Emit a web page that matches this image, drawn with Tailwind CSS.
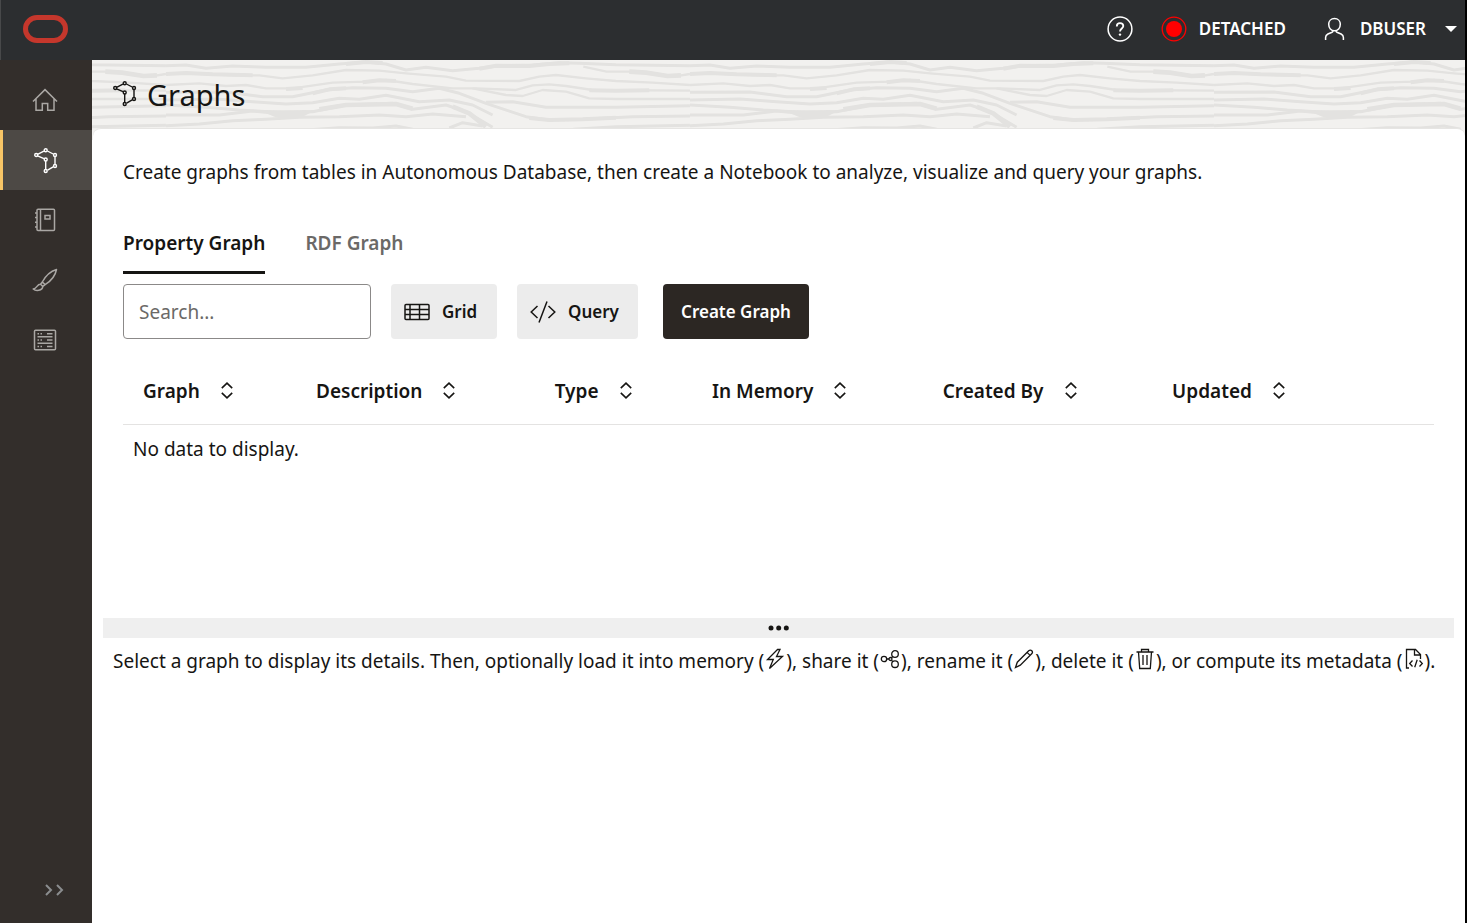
<!DOCTYPE html>
<html lang="en">
<head>
<meta charset="utf-8">
<meta name="viewport" content="width=device-width, initial-scale=1">
<title>Graphs</title>
<script src="https://cdn.jsdelivr.net/npm/@tailwindcss/browser@4"></script>
</head>
<body class="flex min-h-screen flex-col border-r-2 border-black bg-white font-['Noto_Sans','Open_Sans',sans-serif] text-[19px] leading-6 text-[#161513]">

<svg class="hidden" aria-hidden="true">
  <symbol id="graph" viewBox="0 0 24 26">
    <g fill="none" stroke="currentColor" stroke-width="1.4">
      <path d="M3.6 6.3 9.9 3.2M13.4 3 19.2 6M21 8.6v7.8M19.2 18.8l-5.6 3.4M11.7 21.4v-8.5M10 10.6 3.6 7.8"/>
      <circle cx="2.2" cy="7" r="1.5"/><circle cx="11.7" cy="2.3" r="1.5"/><circle cx="21" cy="7" r="1.5"/>
      <circle cx="11.7" cy="11.5" r="1.5"/><circle cx="21" cy="18" r="1.5"/><circle cx="11.7" cy="23" r="1.5"/>
    </g>
  </symbol>
  <symbol id="sort" viewBox="0 0 12 17">
    <path d="m.8 6.200 5.200-5 5.200 5M.8 10.800l5.200 5 5.200-5" fill="none" stroke="currentColor" stroke-width="1.600"/>
  </symbol>
</svg>

<header class="flex h-[60px] items-center justify-between border-l border-[#48494a] bg-[#2c2e30] pr-2 pb-0.5 pl-[22px] font-semibold text-white">
  <a href="#" aria-label="Oracle home">
    <svg width="45" height="28" viewBox="0 0 45 28"><rect x="2.5" y="2.5" width="40" height="23" rx="11.5" fill="none" stroke="#c5372c" stroke-width="5"/></svg>
  </a>
  <div class="flex items-center">
    <button type="button" aria-label="Help">
      <svg width="26" height="26" viewBox="0 0 26 26" fill="none" stroke="#fff" stroke-width="1.5"><circle cx="13" cy="13" r="11.9"/><path d="M9.800 10.400c0-2 1.400-3.200 3.200-3.200s3.300 1.100 3.300 2.900c0 2.300-3.300 2.600-3.300 5.500" stroke-width="1.800"/><circle cx="13" cy="18.600" r="1.200" fill="#fff" stroke="none"/></svg>
    </button>
    <button type="button" class="ml-7 flex items-center gap-3 text-[17px]">
      <svg width="26" height="26" viewBox="0 0 26 26"><circle cx="13" cy="13" r="11.800" fill="none" stroke="#f00" stroke-width="1.300"/><circle cx="13" cy="13" r="8" fill="#f00"/></svg>
      DETACHED
    </button>
    <button type="button" class="ml-[38px] flex items-center text-[17px]">
      <svg class="mr-[14px]" width="22" height="24" viewBox="0 0 22 24" fill="none" stroke="#fff" stroke-width="1.500"><path d="M10.500 1.500c3.400 0 5.800 2.500 5.800 5.800 0 3.600-2.400 6.500-5.800 6.500s-5.800-2.900-5.800-6.500c0-3.300 2.400-5.800 5.800-5.800Z"/><path d="M1.600 23v-2.500c0-1.800.7-2.700 2.300-3.500l4.200-1.800c.9-.4 1-.8 1-1.500M19.400 23v-2.500c0-1.800-.7-2.700-2.300-3.500l-4.200-1.800c-.9-.4-1-.8-1-1.500"/></svg>
      DBUSER
      <svg class="ml-[19px]" width="12" height="6" viewBox="0 0 12 6"><path d="M0 0h12L6 6Z" fill="#fff"/></svg>
    </button>
  </div>
</header>

<div class="flex flex-1">
  <nav class="flex w-[92px] shrink-0 flex-col bg-[#332e2b] pt-[10px] text-[#aaa7a4]" aria-label="Main">
    <a href="#" aria-label="Home" class="flex h-[60px] items-center justify-center pr-0.5">
      <svg width="26" height="24" viewBox="0 0 26 24" fill="none" stroke="currentColor" stroke-width="1.500"><path d="M1 13.500 13 1.600l12 11.900M4 11v11.200h6.300v-6.800h5.400v6.800H22V11"/></svg>
    </a>
    <a href="#" aria-label="Graphs" aria-current="page" class="flex h-[60px] items-center justify-center border-l-3 border-[#f7c566] bg-[#4d4945] pt-0.5 pr-1 text-white">
      <svg class="h-[26px] w-6"><use href="#graph"/></svg>
    </a>
    <a href="#" aria-label="Notebooks" class="flex h-[60px] items-center justify-center pr-0.5">
      <svg width="22" height="24" viewBox="0 0 22 24" fill="none" stroke="currentColor" stroke-width="1.500"><rect x="3" y="1.300" width="17.500" height="21.200" rx="1"/><path d="M6.500 1.300v21.200M1 5h2M1 9.500h2M1 14.200h2M1 19h2"/><rect x="11" y="7.500" width="5" height="3.500"/></svg>
    </a>
    <a href="#" aria-label="Templates" class="flex h-[60px] items-center justify-center pr-0.5">
      <svg width="26" height="24" viewBox="0 0 26 24" fill="none" stroke="currentColor" stroke-width="1.500" stroke-linejoin="round"><path d="M24.500 1.500C19.500 3 13.500 8 10.300 14l2.800 2.600C19 13 23.500 7 24.500 1.500ZM10.300 14l-1.800 2.300 2.300 2.100 2.300-1.800M8.500 16.300c-3.300-.5-3.500 4.500-7.300 4.700 2.500 2.200 9.300 2 9.600-2.600"/></svg>
    </a>
    <a href="#" aria-label="Jobs" class="flex h-[60px] items-center justify-center pr-0.5">
      <svg width="24" height="22" viewBox="0 0 24 22" fill="none" stroke="currentColor" stroke-width="1.500"><rect x="1.500" y="1.300" width="21" height="19.500" rx="1"/><path d="M4.500 7.800h15M4.500 14.200h15M14 4.700h5.500M14 11h5.500M14 17.400h5.500M4.500 4.700H6m1.500 0H9M4.500 11H6m1.500 0H9m-4.500 6.400H6m1.500 0H9"/></svg>
    </a>
    <button type="button" aria-label="Expand navigation" class="mt-auto mb-[26px] ml-11 w-5 text-[#8b8d8f]">
      <svg width="20" height="14" viewBox="0 0 20 14" fill="none" stroke="currentColor" stroke-width="2"><path d="m2 2 5 5-5 5M13 2l5 5-5 5"/></svg>
    </button>
  </nav>

  <main class="relative isolate flex min-w-0 flex-1 flex-col">
    <svg class="absolute top-0 left-0 -z-10 h-20 w-full" aria-hidden="true">
      <defs>
        <pattern id="grain" x="74" y="-10" width="524" height="100" patternUnits="userSpaceOnUse">
          <g transform="scale(.3333)" fill="none" stroke="#e3e2e0" stroke-width="9" stroke-linejoin="round">
            <path d="M0 47 60 45 120 55 200 48 300 52 420 52 520 42 600 36 660 42 720 60 780 52 860 62 940 55 1000 47 1100 45 1180 38 1240 40 1350 44 1572 47"/>
            <path d="M940 56 990 47 1090 48 1150 42 1210 40M540 42 600 36 650 39" stroke-width="12"/>
            <path d="M0 72 60 70 200 76 280 76 350 85 440 76 540 60 640 62 720 70 840 80 900 92 1060 93 1120 80 1170 75 1260 85 1350 93 1460 98 1572 105" stroke-width="7"/>
            <path d="M0 72 60 69 140 73 260 76" stroke-width="12"/>
            <path d="M0 105 100 100 180 108 240 105 300 115 380 115 500 98 600 95 660 90 740 102 860 115 930 115 1050 120 1100 106 1150 103 1200 108 1280 120 1572 122" stroke-width="7"/>
            <path d="M360 117 410 114M590 97 640 91 690 93M1270 121 1350 122 1450 121" stroke-width="12"/>
            <path d="M0 127 180 126 290 140 380 140 480 120 560 113 660 115 740 125 820 115 880 130 960 160 1080 200 1150 210 1250 208 1400 200 1572 198"/>
            <path d="M1090 204 1150 210 1250 208 1350 203M440 130 490 118 540 115" stroke-width="12"/>
            <path d="M0 150 150 147 260 155 360 162 440 158 520 145 580 148 660 136 760 155 850 150 920 165 980 195"/>
            <path d="M0 165 120 172 220 180 360 188 440 185 540 165 680 160 740 178 840 165 900 185 980 232"/>
            <path d="M460 178 540 165 690 162 740 176M860 170 910 190 960 230" stroke-width="14"/>
            <path d="M280 181 350 181 450 180 410 200 370 207 325 200Z" fill="#e3e2e0" stroke="none"/>
            <path d="M0 195 160 195 260 183 380 195M0 227 100 222 200 212 300 208 400 202 520 200 640 195 720 200 800 192 900 200"/>
            <path d="M920 115 1020 135 1070 138 1130 120 1200 125 1270 145 1350 147 1572 147" stroke-width="7"/>
            <path d="M960 157 1040 155 1140 172 1350 172 1572 167"/>
            <path d="M420 240 520 233 620 234 690 228 740 238M850 234 890 218 950 228M1222 238 1350 230 1572 226"/>
            <path d="M1252 50 1322 65 1422 65 1522 80 1572 72" stroke-width="7"/>
            <path d="M1390 65 1440 68 1505 78 1545 76" stroke-width="14"/>
          </g>
        </pattern>
      </defs>
      <rect width="100%" height="100%" fill="#f2f1ef"/>
      <rect width="100%" height="100%" fill="url(#grain)"/>
    </svg>

    <div class="flex h-[68px] items-center gap-[10px] pl-[21px]">
      <svg class="h-[26px] w-6"><use href="#graph"/></svg>
      <h1 class="pt-0.5 text-[29px] leading-9">Graphs</h1>
    </div>

    <section class="ml-px flex-1 rounded-t-lg border-t border-[#e6e5e3] bg-white pt-[31px] pr-[11px] pl-[10px]">
      <div class="px-5">
        <p>Create graphs from tables in Autonomous Database, then create a Notebook to analyze, visualize and query your graphs.</p>

        <div role="tablist" class="mt-[42px] flex gap-10 font-semibold">
          <button type="button" role="tab" aria-selected="true" class="border-b-3 border-[#161513] pt-[5px] pb-4">Property Graph</button>
          <button type="button" role="tab" aria-selected="false" class="border-b-3 border-transparent pt-[5px] pb-4 text-[#6b6967]">RDF Graph</button>
        </div>

        <div class="mt-[10px] flex h-[55px] text-[17px] font-semibold">
          <input type="search" aria-label="Search graphs" placeholder="Search..." class="w-[248px] rounded border border-[#8b8988] px-[15px] text-[19px] font-normal placeholder:text-[#6b6967]">
          <button type="button" class="ml-5 flex w-[106px] items-center gap-3 rounded bg-[#ececec] pl-[13px]">
            <svg width="26" height="18" viewBox="0 0 26 18" fill="none" stroke="currentColor" stroke-width="1.500"><rect x="1" y="1.500" width="24" height="15" rx="1"/><path d="M1 6.500h24M1 11.500h24M6 1.500v15M15.500 1.500v15"/></svg>
            Grid
          </button>
          <button type="button" class="ml-5 flex w-[121px] items-center gap-3 rounded bg-[#ececec] pl-[13px]">
            <svg width="26" height="22" viewBox="0 0 26 22" fill="none" stroke="currentColor" stroke-width="1.500"><path d="M7.500 5 1.200 11l6.300 6M18.500 5l6.300 6-6.300 6M17 .500 9 21.500"/></svg>
            Query
          </button>
          <button type="button" class="ml-[25px] w-[146px] rounded bg-[#2c2723] text-white">Create Graph</button>
        </div>

        <table class="mt-5 w-full table-fixed text-left">
          <colgroup><col class="w-[13.2%]"><col class="w-[18.2%]"><col class="w-[12%]"><col class="w-[17.6%]"><col class="w-[17.5%]"><col></colgroup>
          <thead>
            <tr class="h-[65px] border-b border-[#e4e3e2]">
              <th scope="col" class="pl-5 font-semibold"><button type="button" class="flex items-center gap-[21px]">Graph<svg class="mb-0.5 h-[17px] w-3"><use href="#sort"/></svg></button></th>
              <th scope="col" class="pl-5 font-semibold"><button type="button" class="flex items-center gap-[21px]">Description<svg class="mb-0.5 h-[17px] w-3"><use href="#sort"/></svg></button></th>
              <th scope="col" class="pl-5 font-semibold"><button type="button" class="flex items-center gap-[21px]">Type<svg class="mb-0.5 h-[17px] w-3"><use href="#sort"/></svg></button></th>
              <th scope="col" class="pl-5 font-semibold"><button type="button" class="flex items-center gap-[21px]">In Memory<svg class="mb-0.5 h-[17px] w-3"><use href="#sort"/></svg></button></th>
              <th scope="col" class="pl-5 font-semibold"><button type="button" class="flex items-center gap-[21px]">Created By<svg class="mb-0.5 h-[17px] w-3"><use href="#sort"/></svg></button></th>
              <th scope="col" class="pl-5 font-semibold"><button type="button" class="flex items-center gap-[21px]">Updated<svg class="mb-0.5 h-[17px] w-3"><use href="#sort"/></svg></button></th>
            </tr>
          </thead>
          <tbody>
            <tr><td colspan="6" class="h-[194px] px-[10px] pt-3 align-top">No data to display.</td></tr>
          </tbody>
        </table>
      </div>

      <div role="separator" aria-label="Resize panels" class="flex h-5 items-center justify-center bg-[#efefef]">
        <svg width="22" height="6" viewBox="0 0 22 6" fill="currentColor"><circle cx="3" cy="3" r="2.500"/><circle cx="10.700" cy="3" r="2.500"/><circle cx="18.300" cy="3" r="2.500"/></svg>
      </div>
      <p class="flex items-center pt-[10px] pl-[10px] whitespace-pre">Select a graph to display its details. Then, optionally load it into memory (<svg class="mx-px mb-1 shrink-0" width="20" height="22" viewBox="-1 0 20 22" fill="none" stroke="currentColor" stroke-width="1.300"><path d="M11.500 1.500 1.500 11.500h5.800L3.500 20.500 16.500 8.500h-6l3.500-7Z"/></svg>), share it (<svg class="mx-px mb-1 shrink-0" width="20" height="20" viewBox="0 0 20 20" fill="none" stroke="currentColor" stroke-width="1.300"><circle cx="4" cy="10" r="2.700"/><circle cx="15" cy="5" r="3.300"/><circle cx="15" cy="15.200" r="3.300"/><circle cx="10.500" cy="10" r="1.500"/><path d="M6.700 10H9M11.500 8.800l1.300-1.400M11.500 11.200l1.300 1.600"/></svg>), rename it (<svg class="mx-px mb-1 shrink-0" width="20" height="20" viewBox="0 0 20 20" fill="none" stroke="currentColor" stroke-width="1.300"><path d="m1.500 18.500 1.800-5.300L14.700 1.700c1-.9 2.300-.9 3.100 0s.8 2.100-.1 3L6.300 16.200ZM13 3.400l3.200 3"/></svg>), delete it (<svg class="mx-px mb-1 shrink-0" width="20" height="22" viewBox="0 0 20 22" fill="none" stroke="currentColor" stroke-width="1.300"><path d="M1.500 4h17M6.500 4V1.500h7V4M3.500 4 4.700 20.500h10.600L16.500 4M8 7v10M12 7v10"/></svg>), or compute its metadata (<svg class="mx-px mb-1 shrink-0" width="20" height="22" viewBox="0 0 20 22" fill="none" stroke="currentColor" stroke-width="1.300"><path d="M5 20H2.500V1.500h9l5 5V11M10.500 1.500v5.500h6M8.500 12.500 5.700 15.500l2.800 3M15.500 12.500l2.800 3-2.800 3M13.200 11.800l-2.500 7.500"/></svg>).</p>
    </section>
  </main>
</div>
</body>
</html>
